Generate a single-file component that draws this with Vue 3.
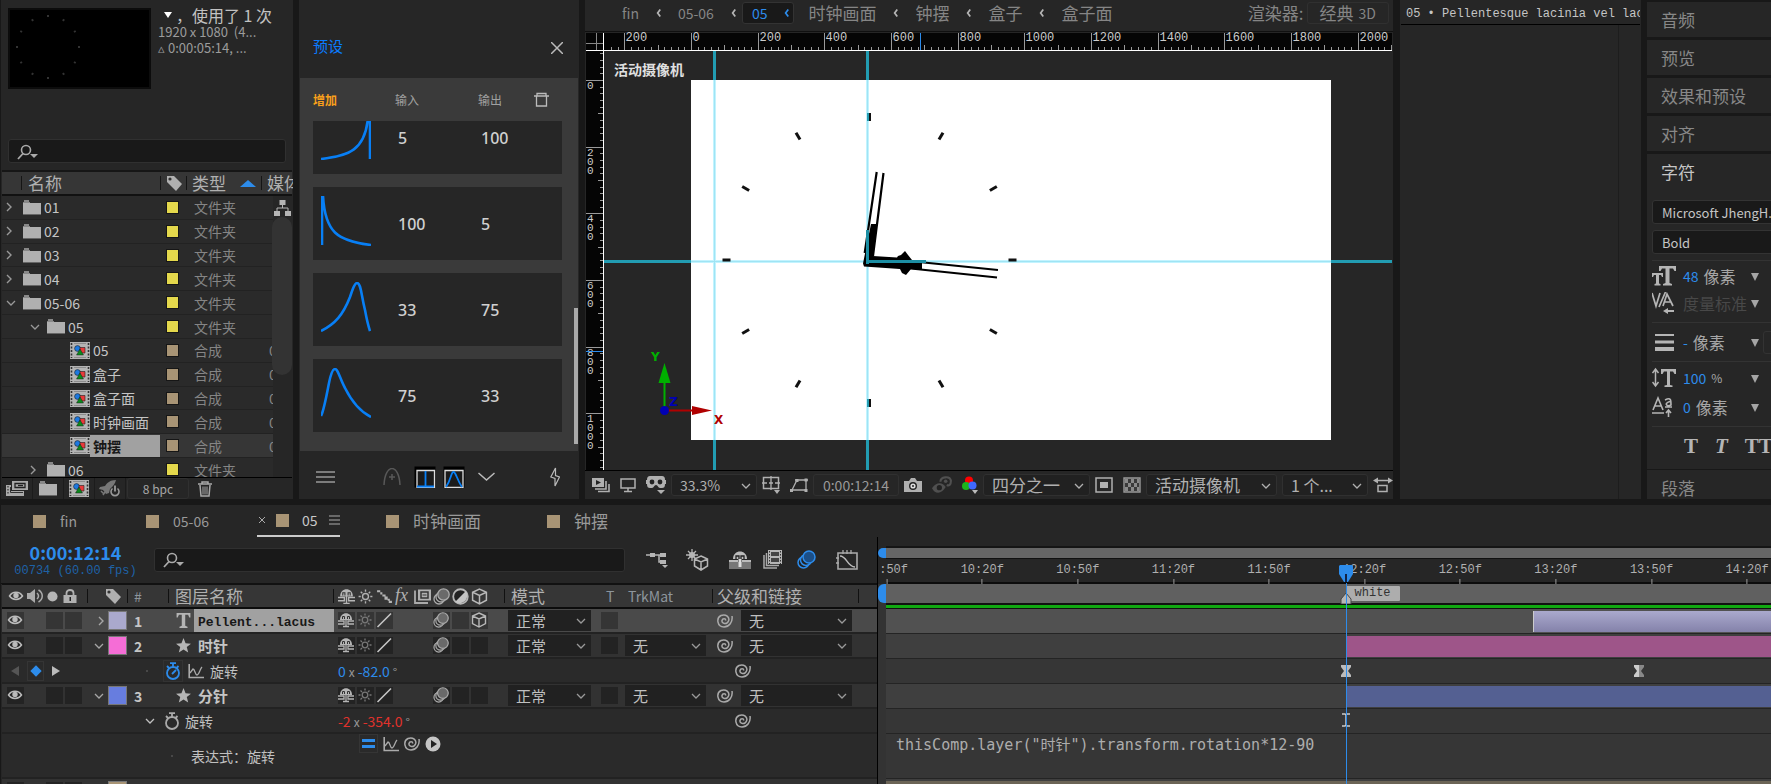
<script setup>
import { ref } from 'vue'

const projectItems = [
  { name: '01', kind: 'folder', depth: 0, arrow: 'right' },
  { name: '02', kind: 'folder', depth: 0, arrow: 'right' },
  { name: '03', kind: 'folder', depth: 0, arrow: 'right' },
  { name: '04', kind: 'folder', depth: 0, arrow: 'right' },
  { name: '05-06', kind: 'folder', depth: 0, arrow: 'down' },
  { name: '05', kind: 'folder', depth: 1, arrow: 'down' },
  { name: '05', kind: 'comp', depth: 2 },
  { name: '盒子', kind: 'comp', depth: 2 },
  { name: '盒子面', kind: 'comp', depth: 2 },
  { name: '时钟画面', kind: 'comp', depth: 2 },
  { name: '钟摆', kind: 'comp', depth: 2, selected: true },
  { name: '06', kind: 'folder', depth: 1, arrow: 'right' }
]

const presets = [
  { input: 5, output: 100, d: 'M0 49C28 46 44 40 47 8L48 0H49V49' },
  { input: 100, output: 5, d: 'M1 49V0H2C4 36 16 45 50 49' },
  { input: 33, output: 75, d: 'M0 49C14 42 22 33 29 15C32 6 34 1 36 1C40 1 40 12 44 28C46 39 48 46 49 49' },
  { input: 75, output: 33, d: 'M0 48C3 42 5 30 8 15C10 5 12 1 14 1C17 1 19 11 24 20C30 32 38 43 50 49' }
]

const rulerX = 691
const rulerY = 80
const scale = 1 / 3
const hTicks = []
for (let u = -240; u <= 2100; u += 20) {
  hTicks.push({ u, p: Math.round(rulerX + u * scale) + 0.5, len: u % 200 === 0 ? 17 : u % 100 === 0 ? 5 : 3 })
}
const vTicks = []
for (let u = -80; u <= 1160; u += 20) {
  vTicks.push({ u, p: Math.round(rulerY + u * scale) + 0.5, len: u % 200 === 0 ? 17 : u % 100 === 0 ? 5 : 3 })
}
const hLabels = hTicks.filter(t => t.u % 200 === 0)
const vLabels = vTicks.filter(t => t.u % 200 === 0)

const hours = Array.from({ length: 12 }, (_, i) => i * 30)

const fontFamily = ref('Microsoft JhengH...')
const fontStyle = ref('Bold')

const compTabs = [
  { name: 'fin' }, { name: '05-06' }, { name: '05', active: true }, { name: '时钟画面' }, { name: '钟摆' }
]

const frameStart = 589.8
const frameSpan = 277.7
const at = frame => ((frame - frameStart) / frameSpan) * 100 + '%'
const timeLabels = [':50f', '10:20f', '10:50f', '11:20f', '11:50f', '12:20f', '12:50f', '13:20f', '13:50f', '14:20f']
  .map((text, i) => ({ text, frame: 590 + i * 30 }))

const rows = [
  { type: 'layer', n: 1, arrow: 'right', color: '#aaa9cd', icon: 'text', name: 'Pellent...lacus', selected: true, cube: true },
  { type: 'layer', n: 2, arrow: 'down', color: '#f56dd6', icon: 'star', name: '时针', matte: true },
  { type: 'keyed' },
  { type: 'layer', n: 3, arrow: 'down', color: '#677ddf', icon: 'star', name: '分针', matte: true },
  { type: 'driven' },
  { type: 'expr' },
  { type: 'blank' }
]
</script>

<template>
  <div class="app">
    <svg class="defs" aria-hidden="true">
      <symbol id="chev-r" viewBox="0 0 8 12"><path d="M2 2l4 4-4 4" fill="none" stroke="currentColor" stroke-width="1.4" /></symbol>
      <symbol id="chev-l" viewBox="0 0 8 12"><path d="M6 2L3 6l3 4" fill="none" stroke="currentColor" stroke-width="2" /></symbol>
      <symbol id="chev-d" viewBox="0 0 12 8"><path d="M2 2l4 4 4-4" fill="none" stroke="currentColor" stroke-width="1.3" /></symbol>
      <symbol id="search" viewBox="0 0 22 16"><circle cx="9" cy="6" r="4.5" fill="none" stroke="currentColor" stroke-width="1.6" /><path d="M6 9.500L1 15" stroke="currentColor" stroke-width="1.8" /><path d="M13 10h8l-4 4z" fill="currentColor" /></symbol>
      <symbol id="tag" viewBox="0 0 16 16"><path d="M1 1h7l8 8-6 7-9-9z" fill="currentColor" /><circle cx="4" cy="4" r="1.600" fill="#333" /></symbol>
      <symbol id="folder" viewBox="0 0 18 15"><path d="M0 3V2h1V0h5v2h1v1z" fill="#888" /><path d="M0 3h18v11H0z" fill="#b0b0b0" /><path d="M0 14h18v1H0z" fill="#666" /></symbol>
      <symbol id="comp" viewBox="0 0 20 17"><path d="M0 0h20v17H0z" fill="#b4b4b4" /><path d="M1.500 1v15M18.500 1v15" stroke="#333" stroke-width="1.600" stroke-dasharray="2 1.500" /><path d="M4 1h12v1H4zM4 15h12v1H4z" fill="#8c8c8c" /><circle cx="7.500" cy="6.500" r="2.900" fill="#1c79e0" stroke="#222" stroke-width=".6" /><path d="M10 5.500h5v5.500h-5z" fill="#e83a3a" stroke="#222" stroke-width=".6" /><path d="M10 7l3.500 6h-7z" fill="#0a8a1c" stroke="#222" stroke-width=".5" /></symbol>
      <symbol id="tree" viewBox="0 0 17 16"><path d="M5.500 0h6v5h-6zM0 11h6v5H0zM11 11h6v5h-6z" fill="#b5b5b5" /><path d="M8.500 5v3M3 11V8h11v3" fill="none" stroke="#b5b5b5" /></symbol>
      <symbol id="trash" viewBox="0 0 14 16"><path d="M0 3h14M4 3V1h6v2M2 4l1 11h8l1-11" fill="none" stroke="currentColor" stroke-width="1.500" /><path d="M5 5.500v8M7 5.500v8M9 5.500v8" stroke="currentColor" /></symbol>
      <symbol id="trash2" viewBox="0 0 15 15"><path d="M0 4h15M3 4V1.500h9V4M2.500 4v10h10V4" fill="none" stroke="currentColor" stroke-width="1.300" /></symbol>
      <symbol id="interpret" viewBox="0 0 22 15"><path d="M6 0h16v9H6z" fill="#aaa" /><path d="M9 2.500h10v4H9z" fill="none" stroke="#222" stroke-width="1.300" /><path d="M12 4.500h5" stroke="#222" stroke-width="1.300" /><path d="M0 4h5v6h13v5H0z" fill="#aaa" /><path d="M2 5v9" stroke="#333" stroke-width="1.200" stroke-dasharray="1.500 1.500" /><path d="M4.500 6v5.500H17" fill="none" stroke="#333" /></symbol>
      <symbol id="rocket" viewBox="0 0 22 17"><path d="M17 0c-6 0-9 3-11 6L1 7l-1 2 4 1 3 4 3-1 1-4c3-3 5-5 6-9z" fill="#777" /><path d="M2 11l3 3M4 15l2-3" stroke="#777" stroke-width="1.500" /><path d="M13.500 8.500a4 4 0 1 0 5 0" fill="none" stroke="#999" stroke-width="1.600" /><path d="M16 5.500v6" stroke="#aaa" stroke-width="1.600" /></symbol>
      <symbol id="cam-take" viewBox="0 0 18 14"><path d="M0 0h12v9H0z" fill="currentColor" /><path d="M4 2v5l5-2.500z" fill="#222" /><path d="M14 3v8H3M17 6v7.500H6" fill="none" stroke="currentColor" stroke-width="1.600" /></symbol>
      <symbol id="monitor" viewBox="0 0 16 14"><path d="M1 1h14v9H1zM8 10v3M4 13.500h8" fill="none" stroke="currentColor" stroke-width="1.500" /></symbol>
      <symbol id="goggles" viewBox="0 0 20 18"><path d="M4 0h12c2 0 3 1 3 4v4c0 3-1 4-3 4h-2c-2 0-2-3-4-3s-2 3-4 3H4c-2 0-3-1-3-4V4c0-3 1-4 3-4z" fill="currentColor" /><path d="M0 4h1v4H0zM19 4h1v4h-1z" fill="currentColor" /><circle cx="6" cy="6" r="2.400" fill="#222" /><circle cx="14" cy="6" r="2.400" fill="#222" /><path d="M11 14h8l-4 4z" fill="currentColor" /></symbol>
      <symbol id="guides" viewBox="0 0 18 18"><path d="M1.500 1.500h15v11h-15z" fill="none" stroke="currentColor" stroke-width="1.500" /><path d="M9 0v5M9 9v5M0 7h5M13 7h5M7 7h4M9 5v4" stroke="currentColor" stroke-width="1.300" /><path d="M12 14h6l-3 4z" fill="currentColor" /></symbol>
      <symbol id="mask" viewBox="0 0 18 16"><path d="M2 13L7 3h9v10zM5 3h13M1 13h4" fill="none" stroke="currentColor" stroke-width="1.300" /><path d="M0 12h3v3H0zM14.500 1.500h3v3h-3zM14.500 12h3v3h-3zM5.500 2h3v3h-3z" fill="currentColor" /></symbol>
      <symbol id="camera" viewBox="0 0 18 14"><path d="M0 3h5l2-3h4l2 3h5v11H0z" fill="currentColor" /><circle cx="9" cy="8" r="3.300" fill="#ddd" stroke="#222" stroke-width="1.400" /><circle cx="9" cy="8" r="1" fill="#222" /></symbol>
      <symbol id="show-snap" viewBox="0 0 19 16"><path d="M0 11c4-6 10-6 13-1-4 7-10 7-13 1z" fill="#505050" /><circle cx="7" cy="10.500" r="2.500" fill="#222" /><path d="M8 5c0-5 9-6 10-1 0 4-2 5-4 4" fill="none" stroke="#505050" stroke-width="2" /><circle cx="13" cy="4.500" r="1.700" fill="#505050" /></symbol>
      <symbol id="rgb" viewBox="0 0 16 18"><circle cx="7" cy="4.500" r="4" fill="#f00" /><circle cx="4" cy="10" r="4" fill="#1cb31c" /><circle cx="10.500" cy="9.500" r="4" fill="#3f68ff" /><path d="M10 14h6l-3 4z" fill="#bbb" /></symbol>
      <symbol id="roi" viewBox="0 0 18 16"><path d="M1 1h16v14H1z" fill="none" stroke="currentColor" stroke-width="1.500" /><path d="M5 5h8v6H5z" fill="currentColor" /></symbol>
      <symbol id="checker" viewBox="0 0 18 16"><path d="M1 1h16v14H1z" fill="#3a3a3a" stroke="#999" stroke-width="1.400" /><path d="M2 2h3v4H2zM8 2h3v4H8zM14 2h2v4h-2zM5 6h3v4H5zM11 6h3v4h-3zM2 10h3v4H2zM8 10h3v4H8zM14 10h2v4h-2z" fill="#8a8a8a" /></symbol>
      <symbol id="aspect" viewBox="0 0 20 15"><path d="M2 3h16M5 8h9v6H5z" fill="none" stroke="currentColor" stroke-width="1.500" /><path d="M5 0L0 3l5 3zM15 0l5 3-5 3z" fill="currentColor" /></symbol>
      <symbol id="eye" viewBox="0 0 16 12"><path d="M1.500 6c3-5 10-5 13 0-3 4.500-10 4.500-13 0z" fill="none" stroke="#bbb" stroke-width="1.500" /><circle cx="8" cy="5.500" r="2.700" fill="#bbb" /></symbol>
      <symbol id="speaker" viewBox="0 0 16 14"><path d="M0 4h3l5-4v14l-5-4H0z" fill="#aaa" /><path d="M10 4c2 2 2 4 0 6M11.500 1c5 3 5 9 0 12" fill="none" stroke="#aaa" stroke-width="1.500" /></symbol>
      <symbol id="dot" viewBox="0 0 10 10"><circle cx="5" cy="5" r="4.600" fill="#b5b5b5" /></symbol>
      <symbol id="lock" viewBox="0 0 13 14"><path d="M3 7V4c0-4 7-4 7 0v3" fill="none" stroke="#b0b0b0" stroke-width="1.800" /><path d="M0 6h13v8H0z" fill="#b0b0b0" /><path d="M6 8h1.500v4H6z" fill="#222" /></symbol>
      <symbol id="shy" viewBox="0 0 16 16"><path d="M2 8C2-1 14-1 14 8z" fill="#b5b5b5" /><path d="M4.500 7V4.500h2V7M9.500 7V4.500h2V7" fill="none" stroke="#333" /><path d="M0 9h6v3H0M16 9h-6v3h6M8 7v8M5 14.500h6" fill="none" stroke="#b5b5b5" stroke-width="1.300" /></symbol>
      <symbol id="sun" viewBox="0 0 16 16"><circle cx="8" cy="8" r="2.800" fill="none" stroke="currentColor" stroke-width="1.300" /><path d="M8 1.500v2M8 12.500v2M1.500 8h2M12.500 8h2M3.500 3.500l1.500 1.500M11 11l1.500 1.500M12.500 3.500L11 5M5 11l-1.500 1.500" stroke="currentColor" stroke-width="1.300" /></symbol>
      <symbol id="dash" viewBox="0 0 16 16"><path d="M1 2h3v2H1zM4 4h2v2H4zM6 6h3v2H6zM8 8h3v3H8zM11 10h2v2h-2zM12 12h3v2h-3z" fill="#b5b5b5" /></symbol>
      <symbol id="slash" viewBox="0 0 16 16"><path d="M1.500 15L15 1.500" stroke="#c5c5c5" stroke-width="1.600" /></symbol>
      <symbol id="film" viewBox="0 0 17 16"><path d="M4 1h13v11H4z" fill="#b0b0b0" /><path d="M7 3.500h7v6H7z" fill="none" stroke="#333" stroke-width="1.500" /><path d="M8.500 6.500h4" stroke="#333" /><path d="M1 2v12.500h13" fill="none" stroke="#aaa" stroke-width="1.800" /></symbol>
      <symbol id="blur" viewBox="0 0 17 17"><g fill="#2b2b2b" stroke="#aaa" stroke-width="1.300"><circle cx="6" cy="11" r="5" /><circle cx="8" cy="9" r="5" /><circle cx="10.500" cy="6.500" r="5.700" fill="#6a6a6a" /></g></symbol>
      <symbol id="blur-on" viewBox="0 0 19 19"><g fill="#222" stroke="#2d8ceb" stroke-width="1.500"><circle cx="6.500" cy="12.500" r="5.500" /><circle cx="9" cy="10" r="5.500" /><circle cx="12" cy="7" r="6" fill="#1c4f87" /></g></symbol>
      <symbol id="half" viewBox="0 0 14 14"><circle cx="7" cy="7" r="6" fill="#222" stroke="#b5b5b5" stroke-width="1.500" /><path d="M11.500 2.500A6.500 6.500 0 0 1 2.500 11.500z" fill="#c5c5c5" /></symbol>
      <symbol id="cube" viewBox="0 0 16 16"><path d="M8 1l6.500 3v7.500L8 15l-6.500-3.500V4zM1.500 4L8 7l6.500-3M8 7v8" fill="none" stroke="#b8b8b8" stroke-width="1.400" /></symbol>
      <symbol id="star" viewBox="0 0 16 16"><path d="M8 0l2.200 5.700 5.800.3-4.500 3.700L13 15.500 8 12.300 3 15.500 4.500 9.700 0 6l5.800-.3z" fill="#b5b5b5" /></symbol>
      <symbol id="text" viewBox="0 0 12 13"><path d="M0 0h12v4h-1l-1-2.500H7.500V11l2 1v1h-7v-1l2-1V1.500H2L1 4H0z" fill="#b5b5b5" /></symbol>
      <symbol id="watch" viewBox="0 0 16 18"><circle cx="8" cy="11" r="6" fill="none" stroke="currentColor" stroke-width="1.800" /><path d="M5 1.200h6M8 1v4M2 4l2 2M13.500 4l-2 2" stroke="currentColor" stroke-width="1.800" /></symbol>
      <symbol id="hand" viewBox="0 0 16 18"><path d="M7 12l4-4" stroke="currentColor" stroke-width="1.800" /></symbol>
      <symbol id="graph" viewBox="0 0 16 16"><path d="M1.200 1v13.500H16" fill="none" stroke="#aaa" stroke-width="1.600" /><path d="M2 10l3-4c2 0 2 6 4 6s3-6 5-8" fill="none" stroke="#aaa" stroke-width="1.300" /></symbol>
      <symbol id="whip" viewBox="0 0 16 16"><path d="M15 3c1 6-3 11-8 11-7 0-8-9-3-11.500 5-2 9 2 7.500 5.500C10 12 4.500 11 5 7.500 5.500 5 9 5 8.500 7.500" fill="none" stroke="#aaa" stroke-width="1.500" /></symbol>
      <symbol id="flow" viewBox="0 0 22 16"><path d="M0 3h10M5 3h2M10 3h3v7h4M13 3h4" fill="none" stroke="#b5b5b5" stroke-width="1.500" /><path d="M4 1h5v4H4zM14 1h6v4h-6zM14 8h6v4h-6zM16 13h6l-3 3z" fill="#b5b5b5" /></symbol>
      <symbol id="draft" viewBox="0 0 23 22"><path d="M15 7l6.500 3v7L15 21l-6.500-4v-7zM8.500 10l6.500 3 6.500-3M15 13v8" fill="none" stroke="#b5b5b5" stroke-width="1.500" /><circle cx="6" cy="6" r="3" fill="#b5b5b5" /><path d="M6 0v12M0 6h12M2 2l8 8M10 2l-8 8" stroke="#b5b5b5" stroke-width="1.300" /></symbol>
      <symbol id="shy-big" viewBox="0 0 22 18"><path d="M0 11h22v7H0z" fill="#777" /><path d="M4 8c0-10 14-10 14 0z" fill="#bbb" /><path d="M7 8V5h3v3M12 8V5h3v3" stroke="#222" fill="none" stroke-width="1.300" /><path d="M9.500 8h3v8h-3z" fill="#ddd" /><path d="M0 11V9h9v2zM13 11V9h9v2z" fill="#bbb" /></symbol>
      <symbol id="film-big" viewBox="0 0 19 19"><path d="M5 0h14v14H5z" fill="#b5b5b5" /><path d="M8 2h8v4H8zM8 8h8v4H8z" fill="#444" /><path d="M6.500 1v13M17.500 1v13" stroke="#333" stroke-dasharray="1.500 1.500" /><path d="M3.500 3v12.500H16M1 5v13h13" fill="none" stroke="#aaa" stroke-width="1.500" /></symbol>
      <symbol id="graph-big" viewBox="0 0 22 20"><path d="M2 3h19v16H2z" fill="none" stroke="#aaa" stroke-width="1.600" /><path d="M4 6c7 0 7 11 15 11" fill="none" stroke="#bbb" stroke-width="1.400" /><path d="M7 0v4M11 0v4M15 0v4M0 8h3M0 13h3" stroke="#aaa" stroke-width="1.300" /></symbol>
    </svg>

    <div class="upper">
      <section class="panel project">
        <div class="summary">
          <svg class="thumb" viewBox="0 0 143 81">
            <rect width="143" height="81" fill="#0c0c0c" /><rect x="2" y="2" width="139" height="77" fill="#000" />
            <rect v-for="h in hours" :key="h" x="39" y="7" width="2" height="2" fill="#333" :transform="`rotate(${h} 40 39)`" />
          </svg>
          <div class="facts">
            <p class="used"><span class="tri"></span>，使用了 1 次</p>
            <p>1920 x 1080&nbsp; (4...</p>
            <p>▵ 0:00:05:14, ...</p>
          </div>
        </div>
        <label class="search"><svg class="ic-search"><use href="#search" /></svg><input type="text" aria-label="搜索项目"></label>
        <div class="listing">
          <table>
            <colgroup><col class="c-name"><col class="c-tag"><col class="c-type"><col></colgroup>
            <thead>
              <tr>
                <th class="h-name">名称</th>
                <th><svg class="i16"><use href="#tag" /></svg></th>
                <th><span class="sorted">类型<i class="up"></i></span></th>
                <th>媒体</th>
              </tr>
            </thead>
          </table>
          <div class="body">
            <div class="scroller">
              <table class="items">
                <colgroup><col class="c-name"><col class="c-tag"><col class="c-type"><col></colgroup>
                <tbody>
                  <tr v-for="(p, i) in projectItems" :key="i" :class="{ selected: p.selected }">
                    <td>
                      <div class="entry" :class="'d' + p.depth">
                        <span class="arrow"><svg v-if="p.arrow === 'right'" class="cr"><use href="#chev-r" /></svg><svg v-else-if="p.arrow" class="cd"><use href="#chev-d" /></svg></span>
                        <svg v-if="p.kind === 'folder'" class="i-folder"><use href="#folder" /></svg>
                        <svg v-else class="i-comp"><use href="#comp" /></svg>
                        <span class="name">{{ p.name }}</span>
                      </div>
                    </td>
                    <td><i class="swatch" :class="p.kind"></i></td>
                    <td class="kind">{{ p.kind === 'folder' ? '文件夹' : '合成' }}</td>
                    <td class="kind">{{ p.kind === 'comp' ? '0' : '' }}</td>
                  </tr>
                </tbody>
              </table>
            </div>
            <div class="rail"><svg class="i-tree"><use href="#tree" /></svg><i class="knob"></i></div>
          </div>
        </div>
        <div class="p-foot">
          <button aria-label="解释素材"><svg class="w22"><use href="#interpret" /></svg></button>
          <button aria-label="新建文件夹"><svg class="i-folder"><use href="#folder" /></svg></button>
          <button aria-label="新建合成"><svg class="w22"><use href="#comp" /></svg></button>
          <button aria-label="项目设置"><svg class="w22"><use href="#rocket" /></svg></button>
          <button class="bpc">8 bpc</button>
          <button class="bin" aria-label="删除"><svg class="i16"><use href="#trash" /></svg></button>
        </div>
      </section>

      <section class="panel presets">
        <header><h2>预设</h2><button aria-label="关闭"><svg class="x" viewBox="0 0 12 12"><path d="M0 0l12 12M12 0L0 12" stroke="#bbb" stroke-width="1.500" /></svg></button></header>
        <div class="shelf">
          <div class="cols"><button class="add">增加</button><span>输入</span><span>输出</span><button aria-label="删除预设"><svg class="bin2"><use href="#trash2" /></svg></button></div>
          <div class="cards">
            <div v-for="(p, i) in presets" :key="i" class="card">
              <svg viewBox="0 0 50 50"><path :d="p.d" fill="none" stroke="#087ff5" stroke-width="2.600" /></svg>
              <span>{{ p.input }}</span><span>{{ p.output }}</span>
            </div>
            <i class="bar"></i>
          </div>
        </div>
        <footer>
          <button class="m1" aria-label="菜单"><svg viewBox="0 0 19 12" class="burger"><path d="M0 1h19M0 6h19M0 11h19" stroke="#999" stroke-width="1.500" /></svg></button>
          <button class="m2" aria-label="添加曲线"><svg viewBox="0 0 18 18" class="w18"><path d="M1 17C2-5 16-5 17 17M9 6v6M6 9h6" fill="none" stroke="#585858" stroke-width="1.500" /></svg></button>
          <button class="m3" aria-label="值图表"><svg viewBox="0 0 22 22" class="w22s"><path d="M.5 .5h21v21H.5z" fill="#000" /><path d="M3 4.500h17.500v17H3z" fill="#1b1b1b" stroke="#ddd" stroke-width="1.300" /><path d="M11.500 5v15.500M3 20.500h17" stroke="#087ff5" stroke-width="1.800" /></svg></button>
          <button class="m4" aria-label="速度图表"><svg viewBox="0 0 22 22" class="w22s"><path d="M.5 .5h21v21H.5z" fill="#000" /><path d="M2 4.500h18v17H2z" fill="#1b1b1b" stroke="#ddd" stroke-width="1.300" /><path d="M3 21C8 14 8 6 10.500 6S14 14 19 21" fill="none" stroke="#087ff5" stroke-width="1.800" /></svg></button>
          <button class="m5" aria-label="展开"><svg viewBox="0 0 17 10" class="w17"><path d="M.5 1l8 7 8-7" fill="none" stroke="#bbb" stroke-width="1.500" /></svg></button>
          <button class="m6" aria-label="应用"><svg viewBox="0 0 10 20" class="bolt"><path d="M5.500 1L.8 10 5 11.500V19l4.500-9-4-1.500z" fill="none" stroke="#bbb" stroke-width="1.200" /></svg></button>
        </footer>
      </section>

      <section class="panel viewer">
        <nav class="crumbs">
          <a href="#">fin</a><svg class="cl"><use href="#chev-l" /></svg>
          <a href="#">05-06</a><svg class="cl"><use href="#chev-l" /></svg>
          <button class="cur">05<svg class="cl"><use href="#chev-l" /></svg></button>
          <a href="#" class="zh">时钟画面</a><svg class="cl"><use href="#chev-l" /></svg>
          <a href="#" class="zh">钟摆</a><svg class="cl"><use href="#chev-l" /></svg>
          <a href="#" class="zh">盒子</a><svg class="cl"><use href="#chev-l" /></svg>
          <a href="#" class="zh">盒子面</a>
          <span class="render zh">渲染器:</span><button class="engine"><span>经典</span> 3D</button>
        </nav>
        <svg class="stage" viewBox="585 32 808 438" preserveAspectRatio="xMinYMin slice">
          <rect x="585" y="32" width="808" height="438" fill="#262626" />
          <rect x="586" y="33" width="806" height="17" fill="#050505" />
          <rect x="586" y="50" width="18" height="420" fill="#050505" />
          <g stroke="#9a9a9a">
            <line v-for="t in hTicks" :key="t.u" :x1="t.p" :x2="t.p" :y1="50 - t.len" y2="50" />
            <line v-for="t in vTicks" :key="t.u" :y1="t.p" :y2="t.p" :x1="603 - t.len" x2="603" />
          </g>
          <rect x="586" y="33" width="17" height="17" fill="#050505" />
          <path d="M596.500 33v17M586 43.500h17" stroke="#888" />
          <rect x="586" y="50" width="806" height="1" fill="#fff" />
          <rect x="603" y="33" width="1" height="437" fill="#fff" />
          <g class="nums">
            <text v-for="t in hLabels" :key="t.u" :x="t.p + 1" y="41">{{ Math.abs(t.u) }}</text>
            <text v-for="t in vLabels" :key="t.u" class="vnum"><tspan v-for="(c, j) in String(t.u)" :key="j" x="587" :y="t.p + 8 + j * 9">{{ c }}</tspan></text>
          </g>
          <path d="M920.500 33v17M586 351.500h17" stroke="#2d8ceb" />
          <path d="M714.500 51v419M867.500 51v419M604 261.500h788" stroke="#229cb2" stroke-width="3" />
          <path d="M691 80h640v360H691z" fill="#fff" />
          <path d="M714.500 80v360M867.500 80v360M691 261.500h640" stroke="#c3f3fe" stroke-width="3" />
          <path d="M714.500 80v360M867.500 80v360M691 261.500h640" stroke="#9fe4f4" />
          <g fill="#111"><rect v-for="h in hours" :key="h" x="868" y="113" width="3" height="8" :transform="`rotate(${h} 869.5 260)`" /></g>
          <path d="M868 113v8M868 399v8" stroke="#229cb2" stroke-width="2" />
          <path d="M876.700 172l-12 81M883.500 173L873 256M919 262l79 8M868 264l129 13.500" fill="none" stroke="#000" stroke-width="2.200" />
          <path d="M871 224h6l-4 32 24 1.500 1-1.500 3-1 4-4 3 4 4 5 10 2v8l-11-1-5 6-4-2-2-4-36-2.500-1-3z" fill="#000" />
          <path d="M867.500 230v34M866 261.500h60" stroke="#1c8ea3" stroke-width="3" />
          <text x="614" y="75" class="cam">活动摄像机</text>
          <path d="M664.500 380v28" stroke="#00b000" stroke-width="2" /><path d="M664.500 363l-6 20h12z" fill="#00b000" />
          <path d="M668 410.500h26" stroke="#b00000" stroke-width="2" /><path d="M692 406l20 4.500-20 4.500z" fill="#b00000" />
          <circle cx="664.500" cy="410.500" r="4.500" fill="#0000b4" />
          <text x="651" y="361" class="axis gy">Y</text><text x="669" y="406" class="axis gz">Z</text><text x="714" y="424" class="axis gx">X</text>
        </svg>
        <footer class="v-foot">
          <button aria-label="始终预览"><svg class="i18"><use href="#cam-take" /></svg></button>
          <button class="sp" aria-label="主查看器"><svg class="i16"><use href="#monitor" /></svg></button>
          <button class="sp" aria-label="VR"><svg class="i20"><use href="#goggles" /></svg></button>
          <span class="sel s-zoom"><select aria-label="放大率"><option>33.3%</option></select><svg><use href="#chev-d" /></svg></span>
          <button aria-label="网格"><svg class="i18"><use href="#guides" /></svg></button>
          <button class="sp" aria-label="蒙版"><svg class="i18"><use href="#mask" /></svg></button>
          <button class="time">0:00:12:14</button>
          <button aria-label="快照"><svg class="i18"><use href="#camera" /></svg></button>
          <button class="sp" aria-label="显示快照"><svg class="i20"><use href="#show-snap" /></svg></button>
          <button class="sp" aria-label="通道"><svg class="w16"><use href="#rgb" /></svg></button>
          <span class="sel s-res"><select aria-label="分辨率"><option>四分之一</option></select><svg><use href="#chev-d" /></svg></span>
          <button aria-label="目标区域"><svg class="i18"><use href="#roi" /></svg></button>
          <button class="sp" aria-label="透明网格"><svg class="i18"><use href="#checker" /></svg></button>
          <span class="sel s-cam"><select aria-label="3D 视图"><option>活动摄像机</option></select><svg><use href="#chev-d" /></svg></span>
          <span class="sel s-view"><select aria-label="视图布局"><option>1 个...</option></select><svg><use href="#chev-d" /></svg></span>
          <button aria-label="像素长宽比"><svg class="i20"><use href="#aspect" /></svg></button>
        </footer>
      </section>

      <section class="panel fx">
        <h2>05 • Pellentesque lacinia vel lacus</h2>
        <div class="fx-body"><i></i></div>
      </section>

      <aside class="side">
        <button class="fold">音频</button>
        <button class="fold">预览</button>
        <button class="fold">效果和预设</button>
        <button class="fold">对齐</button>
        <div class="char">
          <h2>字符</h2>
          <input v-model="fontFamily" aria-label="字体系列" type="text">
          <input v-model="fontStyle" aria-label="字体样式" type="text">
          <div class="grp g1">
            <p><svg class="ci" viewBox="0 0 24 22"><path d="M7 1h17v5h-1.500L21 3.500h-3.500V18l2.500 1v1.500h-9V19l2.500-1V3.500H10L8.500 6H7zM0 8h11v4h-1l-1-2H7v8.500l1.500.5v1.500h-6V19l1.500-.5V10H2l-1 2H0z" fill="#b5b5b5" /></svg><b>48</b><span>像素</span><i></i></p>
            <p><svg class="ci" viewBox="0 0 24 22"><path d="M0 1l4 13L8 1M13.500 0L7 15M11 14l4-12 6 12M13 10h6" fill="none" stroke="#b5b5b5" stroke-width="1.700" /><path d="M11 19l5-3v2h6v2h-6v2z" fill="#b5b5b5" /></svg><span class="off">度量标准</span><i></i></p>
          </div>
          <div class="grp g2">
            <p><svg class="ci" viewBox="0 0 24 22"><path d="M3 4h19" stroke="#b5b5b5" stroke-width="2" /><path d="M3 11h19" stroke="#b5b5b5" stroke-width="3" /><path d="M3 18h19" stroke="#b5b5b5" stroke-width="4" /></svg><b>-</b><span>像素</span><i></i><em></em></p>
          </div>
          <div class="grp g3">
            <p><svg class="ci" viewBox="0 0 24 22"><path d="M3.500 3v15M.5 6l3-4 3 4M.5 15l3 4 3-4" fill="none" stroke="#b5b5b5" stroke-width="1.500" /><path d="M9 2h15v5h-1.500L21 4.500h-3V18l2.500.5V20h-8v-1.500L15 18V4.500h-3L10.500 7H9z" fill="#b5b5b5" /></svg><b>100</b><small>%</small><i></i></p>
            <p><svg class="ci" viewBox="0 0 24 22"><path d="M1 14L6 2l5 12M3 10h6M0 17h12M13 11h7M13 4c6-3 6 0 6 5-5 2-7-2-1-3.500M16.500 21v-6M14 17l2.500-3 2.500 3" fill="none" stroke="#b5b5b5" stroke-width="1.600" /></svg><b>0</b><span>像素</span><i></i></p>
          </div>
          <div class="styles"><button class="bd">T</button><button class="it">T</button><button>TT</button></div>
        </div>
        <button class="fold last">段落</button>
      </aside>
    </div>

    <section class="timeline">
      <nav class="tabs">
        <button v-for="(t, i) in compTabs" :key="i" class="tab" :class="{ active: t.active }">
          <svg v-if="t.active" class="tx" viewBox="0 0 8 8"><path d="M1 1l6 6M7 1L1 7" stroke="#aaa" /></svg>
          <i></i><span>{{ t.name }}</span>
          <svg v-if="t.active" class="tm" viewBox="0 0 11 10"><path d="M0 1h11M0 5h11M0 9h11" stroke="#aaa" /></svg>
        </button>
      </nav>
      <div class="split">
        <div class="outline">
          <div class="tools">
            <div class="clock"><strong>0:00:12:14</strong><span>00734 (60.00 fps)</span></div>
            <label class="search"><svg class="ic-search"><use href="#search" /></svg><input type="text" aria-label="搜索图层"></label>
            <button class="t1" aria-label="合成微型流程图"><svg><use href="#flow" /></svg></button>
            <button class="t2" aria-label="草图 3D"><svg><use href="#draft" /></svg></button>
            <button class="t3" aria-label="隐藏图层"><svg><use href="#shy-big" /></svg></button>
            <button class="t4" aria-label="帧混合"><svg><use href="#film-big" /></svg></button>
            <button class="t5" aria-label="运动模糊"><svg><use href="#blur-on" /></svg></button>
            <button class="t6" aria-label="图表编辑器"><svg><use href="#graph-big" /></svg></button>
          </div>
          <div class="cells head">
            <div class="av"><svg><use href="#eye" /></svg><svg><use href="#speaker" /></svg><svg class="small"><use href="#dot" /></svg><svg><use href="#lock" /></svg></div>
            <div class="tagc"><svg class="i16"><use href="#tag" /></svg></div>
            <div class="num">#</div>
            <div class="lname">图层名称</div>
            <div class="sw"><svg><use href="#shy" /></svg><svg><use href="#sun" /></svg><svg><use href="#dash" /></svg><i class="fxi">fx</i><svg><use href="#film" /></svg><svg><use href="#blur" /></svg><svg><use href="#half" /></svg><svg><use href="#cube" /></svg></div>
            <div class="mode">模式</div>
            <div class="tcell">T</div>
            <div class="trk">TrkMat</div>
            <div class="par">父级和链接</div>
          </div>
          <template v-for="(r, i) in rows" :key="i">
            <div v-if="r.type === 'layer'" class="cells layer" :class="{ selected: r.selected }">
              <div class="av"><span class="box"><svg><use href="#eye" /></svg></span><span></span><span class="box"></span><span class="box"></span></div>
              <div class="tagc"><svg v-if="r.arrow === 'right'" class="cr"><use href="#chev-r" /></svg><svg v-else class="cd"><use href="#chev-d" /></svg><i class="label" :style="{ background: r.color }"></i></div>
              <div class="num">{{ r.n }}</div>
              <div class="lname"><svg><use :href="'#' + r.icon" /></svg><span>{{ r.name }}</span></div>
              <div class="sw">
                <span class="box"><svg><use href="#shy" /></svg></span><span class="box dim"><svg><use href="#sun" /></svg></span><span class="box"><svg><use href="#slash" /></svg></span>
                <span></span><span></span><span class="box"><svg><use href="#blur" /></svg></span><span class="box"></span><span class="box"><svg v-if="r.cube"><use href="#cube" /></svg></span>
              </div>
              <div class="mode"><span class="sel"><select :aria-label="'模式 ' + r.n"><option>正常</option></select><svg><use href="#chev-d" /></svg></span></div>
              <div class="tcell"><span class="box"></span></div>
              <div class="trk"><span v-if="r.matte" class="sel"><select :aria-label="'轨道遮罩 ' + r.n"><option>无</option></select><svg><use href="#chev-d" /></svg></span></div>
              <div class="par"><svg class="i16"><use href="#whip" /></svg><span class="sel"><select :aria-label="'父级 ' + r.n"><option>无</option></select><svg><use href="#chev-d" /></svg></span></div>
            </div>
            <div v-else-if="r.type === 'keyed'" class="cells prop">
              <div class="nav"><i class="prev"></i><span class="kbox"><i></i></span><i class="next"></i></div>
              <div class="tagc"></div>
              <div class="pname keyed"><em></em><span class="wbox"><svg class="w16"><use href="#watch" /><use href="#hand" /></svg></span><svg class="i16"><use href="#graph" /></svg><span>旋转</span></div>
              <div class="val blue">0<small>x</small>-82.0<small>°</small></div>
              <div class="pw"><svg class="i16"><use href="#whip" /></svg></div>
            </div>
            <div v-else-if="r.type === 'driven'" class="cells prop">
              <div class="nav"></div><div class="tagc"></div>
              <div class="pname driven"><svg class="cd"><use href="#chev-d" /></svg><svg class="w16"><use href="#watch" /></svg><span>旋转</span></div>
              <div class="val red">-2<small>x</small>-354.0<small>°</small></div>
              <div class="pw"><svg class="i16"><use href="#whip" /></svg></div>
            </div>
            <div v-else-if="r.type === 'expr'" class="cells prop expr">
              <div class="nav"></div><div class="tagc"></div>
              <div class="pname"><em></em><span>表达式：旋转</span></div>
              <div class="val ops"><button class="eq" aria-label="启用表达式"><i></i><i></i></button><svg class="i16"><use href="#graph" /></svg><svg class="i16"><use href="#whip" /></svg><svg class="i16" viewBox="0 0 16 16"><circle cx="8" cy="8" r="7.500" fill="#c5c5c5" /><path d="M6 4v8l6-4z" fill="#222" /></svg></div>
            </div>
            <div v-else class="cells layer">
              <div class="av"><span class="box"></span><span></span><span class="box"></span><span class="box"></span></div>
              <div class="tagc"><i class="label tanned"></i></div>
            </div>
          </template>
        </div>

        <div class="time-pane">
          <div class="track-area">
            <div class="navbar"><i class="grip"></i></div>
            <div class="ruler"><span v-for="l in timeLabels" :key="l.text" :style="{ left: at(l.frame) }">{{ l.text }}</span></div>
            <div class="work"><i class="grip"></i></div>
            <div class="cache"></div>
            <div class="track on"><i class="clip lilac" :style="{ left: at(792.8) }"></i></div>
            <div class="track"><i class="clip pink" :style="{ left: at(734) }"></i></div>
            <div class="track sub">
              <svg class="key" viewBox="0 0 12 12" :style="{ left: at(734) }"><path d="M1 0h10v2L8 6l3 4v2H1v-2l3-4-3-4z" fill="#bbb" /></svg>
              <svg class="key" viewBox="0 0 12 12" :style="{ left: at(826) }"><path d="M1 0h5v12H1v-2l3-4-3-4z" fill="#ccc" /><path d="M6 0h5v2L8 6l3 4v2H6z" fill="#888" /></svg>
            </div>
            <div class="track"><i class="clip blue" :style="{ left: at(734) }"></i></div>
            <div class="track sub"><svg class="beam" viewBox="0 0 10 14" :style="{ left: at(734) }"><path d="M1 1h3l1 1 1-1h3M1 13h3l1-1 1 1h3M5 2v10" fill="none" stroke="#ccc" stroke-width="1.500" /></svg></div>
            <div class="track sub tall"><code>thisComp.layer("时针").transform.rotation*12-90</code></div>
            <div class="track"><i class="clip tan"></i></div>
            <div class="marker" :style="{ left: at(734) }">white</div>
            <svg class="shield" viewBox="0 0 12 12" :style="{ left: at(734) }"><path d="M6 1l5 6v5H1V7z" fill="#b5b5b5" stroke="#444" /></svg>
            <svg class="pin" viewBox="0 0 14 17" :style="{ left: at(734) }"><path d="M0 1l1-1h12l1 1v8l-5 8H5L0 9z" fill="#2d8ceb" /><path d="M7 9v8" stroke="#124" stroke-width="2" /></svg>
            <i class="playhead" :style="{ left: at(734) }"></i>
          </div>
        </div>
      </div>
    </section>
  </div>
</template>

<style>
html, body { background: #181818; }
</style>

<style scoped>
* { box-sizing: border-box; margin: 0; }
.app {
  height: 100vh; overflow: hidden; display: flex; flex-direction: column; gap: 6px;
  background: #181818; color: #a6a6a6;
  font-family: "Noto Sans CJK SC", "Liberation Sans", sans-serif; font-size: 14px; line-height: 20px;
}
.defs { position: absolute; width: 0; height: 0; }
svg { display: block; flex: none; }
button, input, select { font: inherit; color: inherit; background: none; border: 0; padding: 0; }
button { display: flex; align-items: center; }
select { appearance: none; width: 100%; height: 100%; outline: 0; }
a { color: inherit; text-decoration: none; }
h2 { font-weight: 400; }
.i16 { width: 16px; height: 16px; }
.i18 { width: 18px; height: 18px; }
.i20 { width: 20px; height: 18px; }
.w16 { width: 16px; height: 18px; }
.cr { width: 8px; height: 12px; }
.cd { width: 12px; height: 8px; }
.cl { width: 7px; height: 12px; color: #b5b5b5; }
.i-folder { width: 18px; height: 15px; }
.i-comp { width: 20px; height: 17px; }
.w22 { width: 22px; height: 17px; }
.panel { background: #262626; overflow: hidden; display: flex; flex-direction: column; }
.upper { display: flex; gap: 6px; flex: none; }

.project { width: 292px; flex: none; margin-left: 1px; }
.summary { display: flex; gap: 7px; padding: 8px 7px 0; height: 139px; }
.thumb { width: 143px; height: 81px; }
.facts { font-size: 13px; line-height: 16px; color: #9c9c9c; white-space: nowrap; margin-top: -2px; }
.facts .used { display: flex; align-items: center; font-size: 16px; line-height: 16px; color: #c2c2c2; height: 18px; }
.facts p + p { height: 16px; }
.tri { border: 4px solid transparent; border-top: 6px solid #fff; border-bottom: 0; margin: 0 4px 0 6px; }
.search { display: flex; align-items: center; background: #191919; border: 1px solid #303030; border-radius: 3px; height: 24px; padding-left: 8px; }
.project .search { margin: 0 7px; }
.search input { flex: 1; min-width: 0; height: 100%; outline: 0; }
.ic-search { width: 22px; height: 16px; color: #aaa; margin-top: 1px; }
.listing { margin: 7px 1px 0; border-top: 2px solid #161616; }
table { border-collapse: separate; border-spacing: 0; table-layout: fixed; width: 100%; }
.c-name { width: 158px; }
.c-tag { width: 26px; }
.c-type { width: 75px; }
thead tr { background: #363636; }
th { font-weight: 400; font-size: 17px; line-height: 22px; height: 24px; padding: 0 0 0 6px; text-align: left; white-space: nowrap; border-bottom: 2px solid #111; color: #b0b0b0; background: linear-gradient(#151515, #151515) 0 center / 1px 14px no-repeat; }
th:first-child { background-position-x: 19px; }
.h-name { padding-left: 26px; }
.sorted { display: flex; justify-content: space-between; align-items: center; }
.up { border: 8px solid transparent; border-bottom: 7px solid #2d8ceb; border-top: 0; margin-right: 5px; }
.body { display: flex; height: 281px; overflow: hidden; }
.scroller { flex: 1; min-width: 0; overflow: hidden; }
.items { height: 286px; background: #2a2a2a; }
.items td { padding: 0; border-bottom: 1px solid #222; white-space: nowrap; overflow: hidden; line-height: 20px; }
.items td:nth-child(3), .items td:nth-child(4) { padding-left: 8px; }
.entry { display: flex; align-items: center; height: 22px; }
.arrow { width: 21px; padding-left: 3px; flex: none; color: #999; }
.d1 { padding-left: 24px; }
.d2 { padding-left: 47px; }
.name { padding: 0 3px; color: #c5c5c5; font-size: 14px; line-height: 22px; }
.kind { color: #858585; font-size: 14px; }
.swatch { display: block; width: 13px; height: 13px; margin-left: 6px; background: #a89475; border: 1px solid #161616; }
.swatch.folder { background: #e4d84c; }
tr.selected { background: #363636; }
tr.selected .name { background: #a1a1a1; color: #181818; font-weight: 700; flex: 1; }
.rail { width: 20px; flex: none; padding-top: 4px; margin-left: -1px; }
.i-tree { width: 17px; height: 16px; margin: 0 2px; }
.knob { display: block; background: #333; height: 158px; border-radius: 10px; margin-top: 1px; }
.p-foot { display: flex; border-top: 1px solid #000; margin: 0 1px; height: 22px; }
.p-foot button { width: 31px; justify-content: center; border-right: 1px solid #1c1c1c; }
.p-foot .bpc { width: 62px; margin-left: 1px; border: 1px solid #303030; font-size: 12px; border-radius: 3px; }
.p-foot .bin { color: #aaa; border: 0; }

.presets { width: 280px; flex: none; }
.presets header { height: 78px; display: flex; justify-content: space-between; padding: 36px 16px 0 14px; align-items: flex-start; }
.presets h2 { color: #0a7cff; font-size: 15px; line-height: 20px; }
.x { width: 12px; height: 12px; margin-top: 6px; }
.shelf { flex: 1; min-height: 0; background: #3a3a3a; margin: 0 1px 0 1px; display: flex; flex-direction: column; }
.cols { height: 43px; display: grid; grid-template-columns: 82px 83px 56px auto; padding-left: 13px; align-items: center; font-size: 12px; color: #a0a0a0; }
.cols .add { color: #f9a01b; font-weight: 700; }
.bin2 { width: 15px; height: 15px; color: #bbb; }
.cards { height: 330px; overflow: hidden; display: flex; flex-direction: column; justify-content: flex-end; gap: 13px; padding: 0 16px 19px 13px; position: relative; }
.card { height: 73px; flex: none; background: #262626; display: grid; grid-template-columns: 77px 83px 1fr; padding-left: 8px; align-items: center; font-family: "Noto Sans", sans-serif; font-size: 16px; font-weight: 500; color: #d0d0d0; }
.card svg { width: 50px; height: 50px; margin-top: -6px; }
.bar { position: absolute; right: 0; bottom: 7px; width: 4px; height: 136px; background: #aaa; }
.presets footer { height: 48px; display: flex; align-items: center; padding: 4px 19px 0 17px; }
.burger { width: 19px; height: 12px; }
.w18 { width: 18px; height: 18px; }
.w22s { width: 22px; height: 22px; }
.w17 { width: 17px; height: 10px; }
.bolt { width: 10px; height: 20px; }
.m2 { margin-left: 48px; }
.m3 { margin-left: 13px; }
.m4 { margin-left: 7px; }
.m5 { margin-left: 13px; }
.m6 { margin-left: auto; }

.viewer { flex: 1; min-width: 0; margin-right: 1px; }
.crumbs { height: 32px; border-bottom: 1px solid #101010; padding: 0 4px 5px 37px; display: flex; align-items: center; gap: 16px; color: #858585; white-space: nowrap; }
.zh { font-size: 17px; }
.cur { background: #191919; border: 1px solid #333; border-radius: 3px; height: 22px; padding: 0 3px 0 9px; gap: 16px; color: #2d8ceb; margin: 0 -2px 0 -11px; }
.cur .cl { color: #2d8ceb; }
.render { margin-left: auto; margin-right: -13px; }
.engine { height: 22px; border: 1px solid #303030; border-radius: 3px; padding: 0 12px; gap: 5px; }
.engine span { font-size: 17px; }
.stage { width: 100%; height: 438px; }
.nums { font: 12px "Liberation Mono", monospace; fill: #ccc; }
.vnum { font-size: 11px; }
.cam { font-size: 14px; font-weight: 700; fill: #e0e0e0; }
.axis { font: bold 12px "DejaVu Sans", sans-serif; }
.gy { fill: #00b000; } .gz { fill: #0000b4; } .gx { fill: #b00000; }
.v-foot { height: 29px; border-top: 1px solid #000; display: flex; align-items: center; gap: 5px; padding-left: 7px; color: #b0b0b0; }
.sp { margin-left: 5px; }
.sel { position: relative; display: block; height: 22px; background: #212121; border: 1px solid #303030; border-radius: 3px; }
.sel select { padding-left: 8px; display: block; }
.sel svg { position: absolute; right: 4px; top: 7px; width: 12px; height: 8px; pointer-events: none; }
.s-zoom { width: 86px; } .s-res { width: 107px; font-size: 17px; } .s-cam { width: 131px; font-size: 17px; } .s-view { width: 86px; font-size: 16px; }
.time { width: 86px; height: 22px; border: 1px solid #303030; border-radius: 3px; justify-content: center; color: #999; }

.fx { width: 241px; flex: none; }
.fx h2 { font: 12px/24px "Liberation Mono", monospace; color: #c5c5c5; padding: 2px 0 0 5px; height: 25px; white-space: nowrap; overflow: hidden; border-bottom: 1px solid #000; margin: 0 1px; }
.fx-body { flex: 1; display: flex; justify-content: flex-end; }
.fx-body i { width: 23px; border-left: 1px solid #1d1d1d; }

.side { width: 124px; flex: none; overflow: hidden; display: flex; flex-direction: column; gap: 3px; padding-top: 2px; }
.fold { height: 35px; flex: none; background: #262626; padding-left: 14px; font-size: 17px; color: #888; white-space: nowrap; }
.char { background: #262626; flex: none; height: 315px; overflow: hidden; }
.char h2 { font-size: 17px; line-height: 36px; height: 46px; padding-left: 14px; color: #c5c5c5; }
.char input { display: block; width: 160px; height: 24px; margin: 0 0 6px 5px; padding-left: 9px; background: #191919; border: 1px solid #333; border-radius: 3px; color: #c5c5c5; font-size: 13px; }
.grp { margin-left: 5px; border-top: 1px solid #333; font-size: 16px; display: flex; flex-direction: column; justify-content: space-around; }
.grp p { display: flex; align-items: center; height: 26px; position: relative; }
.grp b { font-weight: 400; font-size: 14px; color: #2d8ceb; margin-right: 5px; }
.grp small { font-size: 12px; }
.grp i { position: absolute; left: 99px; top: 10px; border: 4px solid transparent; border-top: 8px solid #a5a5a5; border-bottom: 0; }
.grp em { position: absolute; left: 111px; top: 2px; width: 20px; height: 23px; border: 1px solid #333; border-radius: 3px; }
.ci { width: 24px; height: 22px; margin-right: 7px; }
.off { color: #484848; }
.g1 { height: 62px; margin-top: 1px; padding: 2px 0 6px; } .g2 { height: 39px; } .g3 { height: 65px; padding: 2px 0 5px; }
.styles { display: flex; border-top: 1px solid #333; margin-left: 5px; padding: 8px 0 0 32px; font: bold 21px/22px "Liberation Serif", serif; color: #b5b5b5; gap: 17px; }
.styles .it { font-style: italic; }
.fold.last { height: auto; flex: 1; margin-top: -2px; padding-top: 6px; min-height: 29px; }

.timeline { background: #262626; flex: 1; min-height: 0; margin-left: 1px; display: flex; flex-direction: column; overflow: hidden; }
.tabs { flex: none; display: grid; grid-template-columns: 113px 111px 129px 161px auto; justify-content: start; padding-left: 32px; height: 32px; color: #999; font-size: 17px; white-space: nowrap; }
.tab { justify-self: start; align-self: start; gap: 14px; height: 32px; }
.tab i { width: 13px; height: 13px; background: #a89475; }
.tab:nth-child(-n+3) { font-size: 14px; }
.tab.active { color: #c8c8c8; border-bottom: 2px solid #ccc; gap: 13px; padding-left: 1px; }
.tab.active i { margin-left: -3px; }
.tx { width: 8px; height: 8px; } .tm { width: 11px; height: 10px; margin-left: -2px; }
.split { flex: none; display: flex; }
.outline { width: 877px; flex: none; border-right: 1px solid #000; }
.tools { height: 47px; display: flex; align-items: center; padding-bottom: 1px; border-bottom: 1px solid #111; }
.clock { width: 153px; text-align: center; padding-right: 4px; }
.clock strong { display: block; color: #2d8ceb; font-size: 18px; line-height: 22px; }
.clock span { display: block; font: 12px/16px "Liberation Mono", monospace; color: #1e62a6; }
.tools .search { width: 471px; }
.t1 svg { width: 22px; height: 16px; } .t2 svg { width: 23px; height: 22px; } .t3 svg { width: 22px; height: 18px; } .t4 svg, .t5 svg { width: 19px; height: 19px; } .t6 svg { width: 22px; height: 20px; }
.t1 { margin-left: 21px; } .t2 { margin-left: 18px; } .t3 { margin-left: 20px; } .t4 { margin-left: 12px; } .t5 { margin-left: 15px; } .t6 { margin-left: 20px; }

.cells { display: grid; grid-template-columns: 86px 40px 41px 165px 171px 93px 23px 92px 146px 1fr; height: 25px; border-bottom: 2px solid #222; background: #323232; align-items: center; margin-left: 1px; }
.cells > div { display: flex; align-items: center; min-width: 0; }
.head { background: #363636; font-size: 17px; color: #b0b0b0; border-top: 1px solid #111; border-bottom: 2px solid #0c0c0c; }
.head > div { height: 14px; border-right: 1px solid #111; white-space: nowrap; }
.head .mode, .head .tcell { border: 0; }
.head .num, .head .tcell, .head .trk { font-size: 14px; color: #8d959c; }
.head .av svg { width: 16px; height: 14px; }
.head .av { gap: 3px; padding-left: 6px; }
.head .av .small { width: 13px; height: 11px; }
.head .tagc { padding-left: 17px; }
.head .mode { padding-left: 6px; }
.head .tcell { padding-left: 8px; }
.head .trk { padding-left: 7px; }
.head .lname { padding-left: 6px; }
.num { padding-left: 6px; color: #c5c5c5; font-weight: 700; }
.head .num { font-weight: 400; }
.sw { gap: 2px; padding-left: 4px; }
.sw > * { width: 17px; height: 17px; flex: none; }
.sw svg { width: 17px; height: 17px; }
.fxi { font: italic 18px/15px "Liberation Serif", serif; }
.box { width: 17px; height: 17px; background: #232323; display: block; }
.box svg { width: 16px; height: 16px; }
.dim { color: #777; }
.layer .av { display: grid; grid-template-columns: 17px 18px 17px 17px; gap: 2px; padding-left: 5px; }
.layer .tagc { justify-content: flex-end; gap: 3px; padding-right: 1px; }
.label { width: 19px; height: 19px; border: 1px solid #777; }
.tanned { background: #a89475; }
.layer .lname { height: 23px; }
.lname svg { width: 15px; height: 15px; margin: 0 3px 0 7px; }
.lname span { flex: 1; height: 23px; line-height: 24px; padding-left: 4px; font-size: 15px; font-weight: 700; color: #c5c5c5; }
.layer.selected { background: #4a4a4a; }
.selected .lname span { background: #a1a1a1; color: #181818; font: bold 13px/27px "Liberation Mono", monospace; }
.selected .box { background: #353535; }
.layer .sel { height: 21px; border: 0; border-radius: 0; color: #c0c0c0; width: 100%; }
.layer .sel select { font-size: 15px; }
.layer .sel svg { color: #999; }
.layer .mode { padding: 0 7px 0 3px; }
.layer .tcell { padding-left: 3px; }
.layer .trk { padding: 0 7px 0 4px; }
.par { gap: 8px; padding: 0 7px 0 4px; }
.prop { background: #2a2a2a; grid-template-columns: 86px 40px 206px 171px 1fr; }
.prop .pw { padding-left: 230px; }
.nav { gap: 8px; padding-left: 9px; }
.prev { border: 5px solid transparent; border-right: 8px solid #555; border-left: 0; }
.next { border: 5px solid transparent; border-left: 8px solid #bbb; border-right: 0; }
.kbox { width: 17px; height: 20px; border: 1px solid #353535; display: flex; align-items: center; justify-content: center; }
.kbox i { width: 8px; height: 8px; background: #2d8ceb; transform: rotate(45deg); }
.pname { color: #c0c0c0; font-size: 14px; }
.pname em { width: 2px; height: 2px; background: #484848; }
.keyed { padding-left: 18px; gap: 5px; }
.keyed .wbox { color: #2d8ceb; width: 20px; margin-left: 10px; border: 1px solid #333; padding: 1px; }
.keyed span:last-child { margin-left: 1px; }
.driven { padding-left: 16px; gap: 5px; }
.driven .w16 { margin-left: 3px; color: #aaa; }
.val { padding-left: 4px; font-size: 14px; }
.val small { font-size: 12px; color: #999; margin: 0 3px; padding-top: 2px; }
.blue { color: #2d8ceb; } .red { color: #e0322c; }
.expr { height: 45px; }
.expr .pname { padding: 0 0 0 43px; gap: 18px; }
.expr .val { align-self: start; padding: 0 0 0 25px; gap: 5px; }
.eq { width: 19px; height: 19px; border: 1px solid #353535; flex-direction: column; justify-content: center; gap: 3px; }
.eq i { width: 13px; height: 3px; background: #2d8ceb; }

.time-pane { flex: 1; min-width: 0; background: #333; padding-left: 8px; overflow: hidden; }
.track-area { position: relative; }
.navbar { height: 21px; background: linear-gradient(#262626 9px, #151515 9px 11px, #666 11px); position: relative; margin-left: -8px; border-left: 8px solid #262626; }
.grip { position: absolute; left: -8px; bottom: 0; width: 8px; height: 10px; background: #2d8ceb; border-radius: 6px 0 0 6px; }
.ruler { position: relative; height: 26px; background: #262626; border-top: 1px solid #111; border-bottom: 2px solid #0c0c0c; box-shadow: -8px 0 #262626; }
.ruler span { position: absolute; top: 2px; transform: translateX(-50%); font: 12px/18px "Liberation Mono", monospace; color: #b0b0b0; height: 23px; background: linear-gradient(#999, #999) center bottom / 1px 5px no-repeat; }
.ruler span:first-child { padding-left: 14px; }
.work { height: 20px; background: #606060; position: relative; border-bottom: 1px solid #111; }
.work .grip { height: 19px; }
.cache { height: 5px; background: #11a811; border: 1px solid #111; border-width: 1px 0; }
.track { height: 25px; background: #3f3f3f; border-bottom: 1px solid #242424; position: relative; }
.on { background: #515151; }
.sub { background: #363636; }
.tall { height: 45px; }
.clip { position: absolute; right: 0; top: 2px; height: 21px; }
.lilac { background: linear-gradient(#aaa9cd, #8482aa); border-left: 1px solid #ccc; }
.pink { background: #9e5589; } .blue.clip { background: #546092; } .tan { background: #6b6456; left: 0; }
.key { position: absolute; top: 6px; width: 12px; height: 12px; margin-left: -6px; }
.beam { position: absolute; top: 4px; width: 10px; height: 14px; margin-left: -5px; }
code { display: block; padding: 1px 0 0 10px; font: 15px/20px "DejaVu Sans Mono", "Noto Sans CJK SC", monospace; color: #adadad; white-space: nowrap; }
.marker { position: absolute; top: 49px; height: 15px; padding: 0 9px 0 9px; background: #adadad; color: #333; font: 12px/15px "Liberation Mono", monospace; border-radius: 1px; }
.shield { position: absolute; top: 55px; width: 12px; height: 12px; margin-left: -6px; }
.pin { position: absolute; top: 28px; width: 14px; height: 17px; margin-left: -7px; }
.playhead { position: absolute; top: 46px; bottom: 0; width: 1px; background: #2d8ceb; }
</style>
